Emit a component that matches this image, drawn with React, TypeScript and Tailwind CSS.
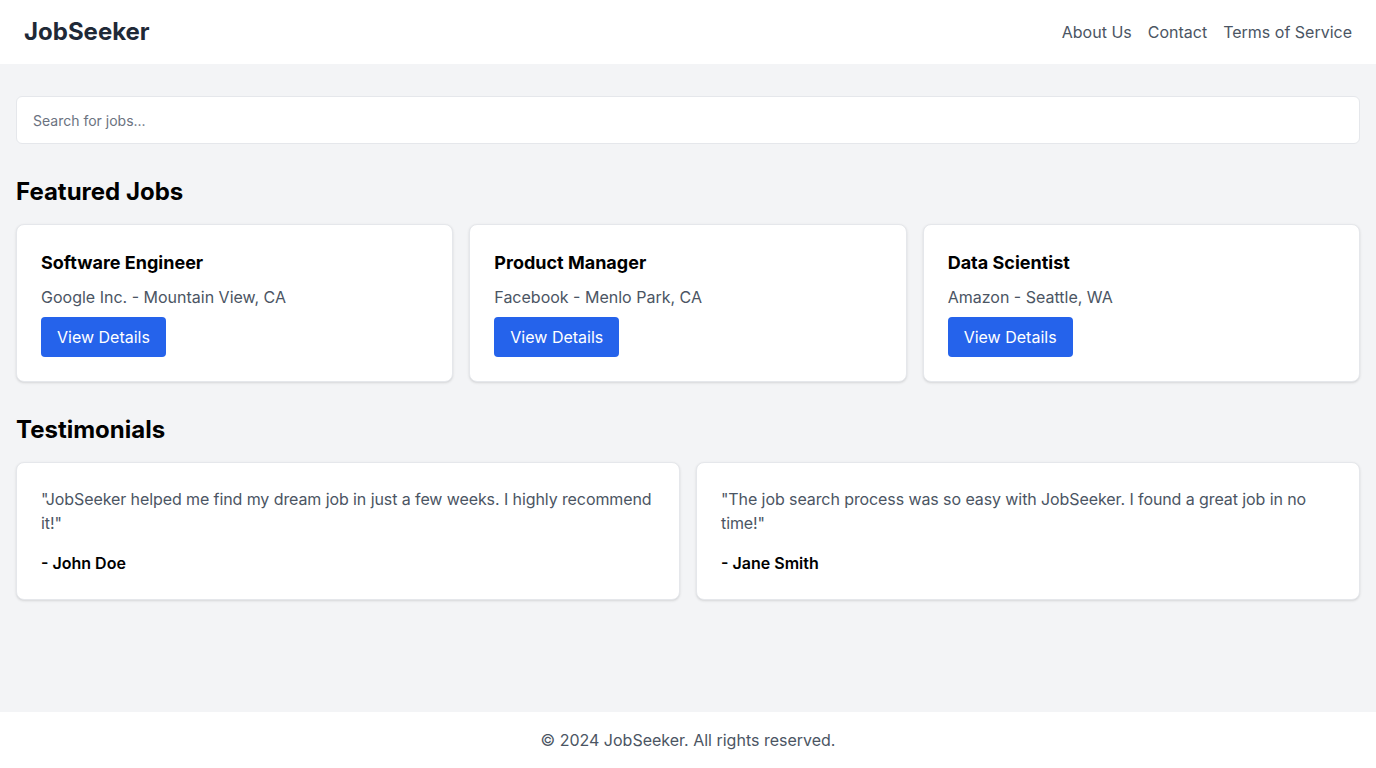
const jobs = [
  { title: 'Software Engineer', company: 'Google Inc.', location: 'Mountain View, CA' },
  { title: 'Product Manager', company: 'Facebook', location: 'Menlo Park, CA' },
  { title: 'Data Scientist', company: 'Amazon', location: 'Seattle, WA' },
]

const testimonials = [
  {
    quote: '"JobSeeker helped me find my dream job in just a few weeks. I highly recommend it!"',
    name: '- John Doe',
  },
  {
    quote: '"The job search process was so easy with JobSeeker. I found a great job in no time!"',
    name: '- Jane Smith',
  },
]

function App() {
  return (
    <div className="flex min-h-screen flex-col bg-[#f3f4f6] font-['Inter',sans-serif]">
      <header className="flex items-center justify-between bg-white px-6 py-4">
        <h1 className="text-2xl font-bold text-[#1f2937]">JobSeeker</h1>
        <nav className="flex gap-4 text-base text-[#4b5563]">
          <a href="#">About Us</a>
          <a href="#">Contact</a>
          <a href="#">Terms of Service</a>
        </nav>
      </header>

      <main className="flex-1 px-4 py-8">
        <input
          type="text"
          placeholder="Search for jobs..."
          className="mb-8 block h-12 w-full rounded-md border border-[#e5e7eb] bg-white px-4 text-sm text-[#1f2937] placeholder:text-[#6b7280] focus:outline-none"
        />

        <section className="mb-8">
          <h2 className="mb-4 text-2xl font-bold text-black">Featured Jobs</h2>
          <div className="grid grid-cols-3 gap-4">
            {jobs.map((job) => (
              <div key={job.title} className="rounded-lg border border-[#e5e7eb] bg-white p-6 shadow-sm">
                <h3 className="text-lg font-bold text-black">{job.title}</h3>
                <p className="mt-2 text-[#4b5563]">
                  {job.company} - {job.location}
                </p>
                <button className="mt-2 rounded bg-[#2563eb] px-4 py-2 text-white hover:bg-[#1d4ed8]">
                  View Details
                </button>
              </div>
            ))}
          </div>
        </section>

        <section>
          <h2 className="mb-4 text-2xl font-bold text-black">Testimonials</h2>
          <div className="grid grid-cols-2 gap-4">
            {testimonials.map((t) => (
              <div key={t.name} className="rounded-lg border border-[#e5e7eb] bg-white p-6 shadow-sm">
                <p className="tracking-[-0.09px] text-[#4b5563]">{t.quote}</p>
                <p className="mt-4 font-semibold text-black">{t.name}</p>
              </div>
            ))}
          </div>
        </section>
      </main>

      <footer className="bg-white py-4 text-center text-[#4b5563]">
        © 2024 JobSeeker. All rights reserved.
      </footer>
    </div>
  )
}

export default App
